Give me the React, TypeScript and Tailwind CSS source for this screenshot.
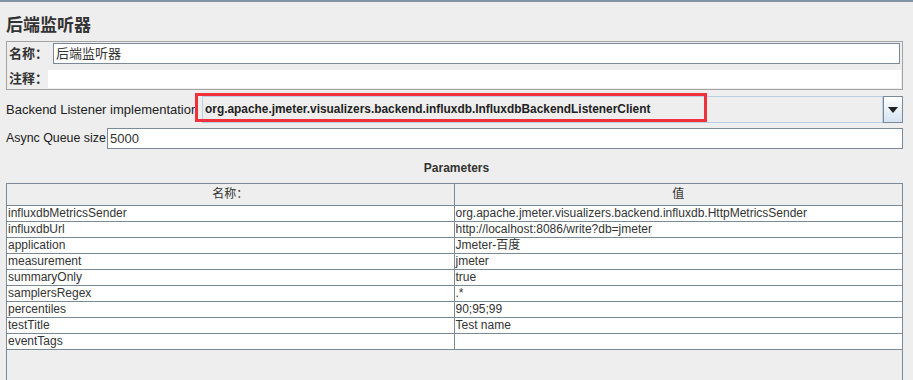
import React from "react";

const sans = "font-['Liberation_Sans','Noto_Sans_CJK_SC',sans-serif]";

const params: [string, string][] = [
  ["influxdbMetricsSender", "org.apache.jmeter.visualizers.backend.influxdb.HttpMetricsSender"],
  ["influxdbUrl", "http://localhost:8086/write?db=jmeter"],
  ["application", "Jmeter-百度"],
  ["measurement", "jmeter"],
  ["summaryOnly", "true"],
  ["samplersRegex", ".*"],
  ["percentiles", "90;95;99"],
  ["testTitle", "Test name"],
  ["eventTags", ""],
];

function ComboArrow() {
  return (
    <svg width="10" height="6" viewBox="0 0 10 6">
      <path d="M0 0 H10 L5 6 Z" fill="#222" />
    </svg>
  );
}

export default function App() {
  return (
    <div className={`w-[913px] h-[380px] overflow-hidden bg-[#eeeeee] text-[#333] ${sans} flex flex-col`}>
      <div className="h-[2px] bg-[#8594a4]" />

      {/* title */}
      <div className="h-[39px] pl-[6px] pt-[14px] text-[17px] leading-[19px] font-bold">后端监听器</div>

      {/* name / comment panel */}
      <div className="ml-[6px] w-[897px] border border-[#a3a3a3] p-[1px] pt-0 flex flex-col">
        <div className="flex h-[22px] pt-[1px]">
          <span className="w-[45px] pl-[1px] text-[13px] leading-[21px] font-bold">名称：</span>
          <div className="flex-1 mr-[1px] h-[21px] bg-white border border-[#7a8a99] pl-[2px] text-[13px] leading-[19px]">
            后端监听器
          </div>
        </div>
        <div className="flex h-[18px] mt-[6px]">
          <span className="w-[40px] pl-[1px] text-[13px] leading-[18px] font-bold">注释：</span>
          <div className="flex-1 bg-white" />
        </div>
      </div>

      {/* backend implementation */}
      <div className="flex mt-[6px] h-[27px] pl-[6px] items-center">
        <span className="w-[196px] text-[13px] leading-[27px] whitespace-nowrap text-[#222]">Backend Listener implementation</span>
        <div className="relative flex flex-1 mr-[10px] h-[27px]">
          <div className="flex-1 border border-[#b8cfe5] bg-[#eeeeee] pl-[2px] text-[11.9px] font-bold leading-[25px] text-[#222]">
            org.apache.jmeter.visualizers.backend.influxdb.InfluxdbBackendListenerClient
          </div>
          <div className="w-[20px] border border-[#7a8a99] bg-gradient-to-b from-white to-[#d5e3f1] flex items-center justify-center">
            <ComboArrow />
          </div>
          <div className="absolute left-[-7px] top-[-3px] w-[512px] h-[29px] border-[3px] border-[#f0303a]" />
        </div>
      </div>

      {/* async queue */}
      <div className="flex mt-[5px] h-[21px] pl-[6px] items-center">
        <span className="w-[101px] text-[12.4px] leading-[21px] whitespace-nowrap text-[#222]">Async Queue size</span>
        <div className="flex-1 mr-[10px] h-[21px] bg-white border border-[#7a8a99] pl-[2px] text-[13px] leading-[19px]">
          5000
        </div>
      </div>

      {/* parameters */}
      <div className="h-[34px] pt-[12px] text-center text-[12px] leading-[14px] font-bold">Parameters</div>

      <div className="ml-[6px] w-[897px] flex-1 border-l border-r border-t border-[#7a8a99] flex flex-col">
        <div className="grid grid-cols-2 h-[22px] border-b border-[#7a8a99] text-[12px] leading-[21px]">
          <div className="text-center border-r border-[#7a8a99]">名称：</div>
          <div className="text-center">值</div>
        </div>
        {params.map(([k, v]) => (
          <div key={k} className="grid grid-cols-2 h-[16px] bg-white border-b border-[#7a8a99] text-[12px] leading-[15px]">
            <div className="pl-[1px] border-r border-[#7a8a99] whitespace-nowrap">{k}</div>
            <div className="pl-[1px] whitespace-nowrap">{v}</div>
          </div>
        ))}
      </div>
    </div>
  );
}
